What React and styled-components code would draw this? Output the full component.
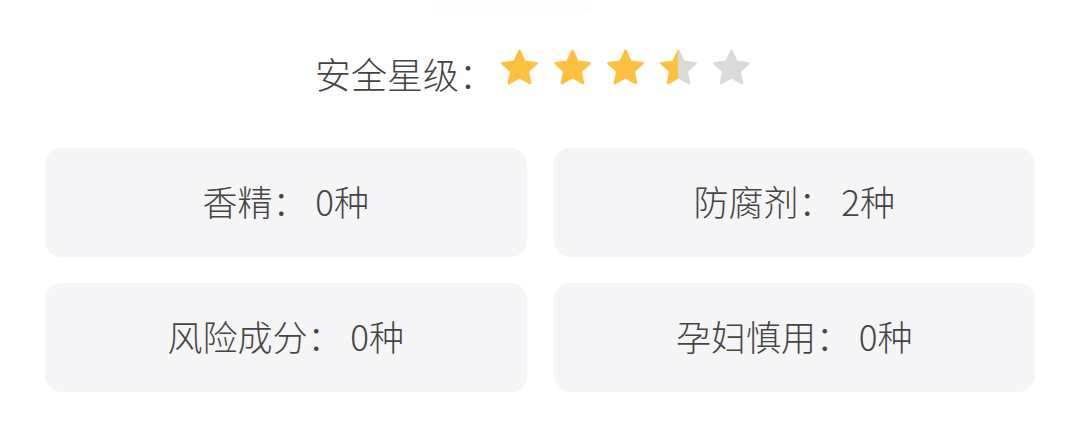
import React from "react";
import styled, { createGlobalStyle } from "styled-components";

const GlobalStyle = createGlobalStyle`
    html, body {
        margin: 0;
        padding: 0;
        background: #ffffff;
    }
    body {
        font-family: "Noto Sans CJK SC", "Noto Sans", sans-serif;
        color: #444444;
    }
`;

const Page = styled.div`
    width: 1080px;
    height: 436px;
    overflow: hidden;
    background: #ffffff;
`;

const TopStub = styled.div`
    width: 160px;
    height: 14px;
    margin-left: 433px;
    background: #fdfdfc;
    border-radius: 0 0 6px 6px;
`;

const RatingRow = styled.div`
    display: flex;
    justify-content: center;
    align-items: baseline;
    margin-top: 36px;
    height: 40px;
`;

const Label = styled.span`
    font-size: 36px;
    line-height: 36px;
    font-weight: 300;
    color: #444444;
    margin-right: 5px;
`;

const Stars = styled.div`
    display: flex;
    gap: 14px;
    margin-right: 14px;
    position: relative;
    top: -2px;
`;

const StarSvg = styled.svg`
    width: 39px;
    height: 39px;
    display: block;
`;

const Grid = styled.div`
    display: grid;
    grid-template-columns: 1fr 1fr;
    column-gap: 27px;
    row-gap: 26px;
    padding: 0 45px;
    margin-top: 58px;
`;

const Card = styled.div`
    box-sizing: border-box;
    height: 109px;
    padding-bottom: 5px;
    border-radius: 16px;
    background: #f5f5f7;
    display: flex;
    align-items: center;
    justify-content: center;
    font-size: 35px;
    font-weight: 300;
    color: #444444;
    white-space: pre;
`;

const YELLOW = "#fdc03f";
const GRAY = "#dadada";
const STAR_POINTS =
    "12,1.8 15.09,8.55 22.46,9.4 17.0,14.4 18.47,21.6 12,17.9 5.53,21.6 7.0,14.4 1.54,9.4 8.91,8.55";

function Star({ fill, id }) {
    // fill: 0..1 portion coloured yellow from the left
    const color = fill >= 1 ? YELLOW : fill <= 0 ? GRAY : `url(#${id})`;
    return (
        <StarSvg viewBox="0 0 24 24">
            {fill > 0 && fill < 1 && (
                <defs>
                    <linearGradient id={id} x1="0" x2="1" y1="0" y2="0">
                        <stop offset={fill} stopColor={YELLOW} />
                        <stop offset={fill} stopColor={GRAY} />
                    </linearGradient>
                </defs>
            )}
            <polygon
                points={STAR_POINTS}
                fill={color}
                stroke={color}
                strokeWidth="1.6"
                strokeLinejoin="round"
            />
        </StarSvg>
    );
}

const items = [
    "香精： 0种",
    "防腐剂： 2种",
    "风险成分： 0种",
    "孕妇慎用： 0种",
];

export default function App() {
    const score = 3.5;
    return (
        <Page>
            <GlobalStyle />
            <TopStub />
            <RatingRow>
                <Label>安全星级：</Label>
                <Stars>
                    {[0, 1, 2, 3, 4].map((i) => (
                        <Star key={i} id={`star-half-${i}`} fill={Math.max(0, Math.min(1, score - i))} />
                    ))}
                </Stars>
            </RatingRow>
            <Grid>
                {items.map((t) => (
                    <Card key={t}>{t}</Card>
                ))}
            </Grid>
        </Page>
    );
}
